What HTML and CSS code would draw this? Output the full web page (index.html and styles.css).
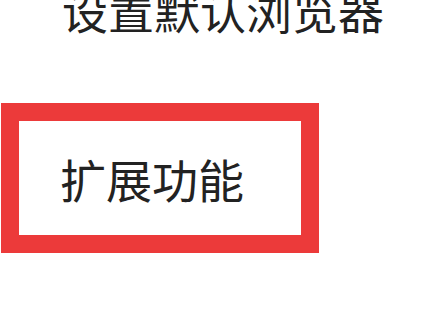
FILE: index.html
```html
<!DOCTYPE html>
<html lang="zh-CN">
<head>
<meta charset="utf-8">
<link rel="stylesheet" href="styles.css">
</head>
<body>
<div class="page">
  <div class="title">设置默认浏览器</div>
  <div class="highlight">
    <span class="label">扩展功能</span>
  </div>
</div>
</body>
</html>
```

FILE: styles.css
```css
html, body {
  margin: 0;
  padding: 0;
  background: #ffffff;
}
body {
  width: 432px;
  height: 309px;
  overflow: hidden;
  font-family: "Noto Sans CJK SC", "Noto Sans", sans-serif;
  color: #222222;
}
.page {
  display: flex;
  flex-direction: column;
  align-items: flex-start;
}
.title {
  font-size: 46px;
  line-height: 46px;
  margin-top: -14px;
  padding-left: 62px;
  white-space: nowrap;
}
.highlight {
  box-sizing: border-box;
  margin-top: 71px;
  margin-left: 1px;
  width: 318px;
  height: 150px;
  border: 18px solid #ec3a3a;
  padding: 34px 0 0 41px;
}
.label {
  display: block;
  font-size: 46px;
  line-height: 46px;
  white-space: nowrap;
}
```
